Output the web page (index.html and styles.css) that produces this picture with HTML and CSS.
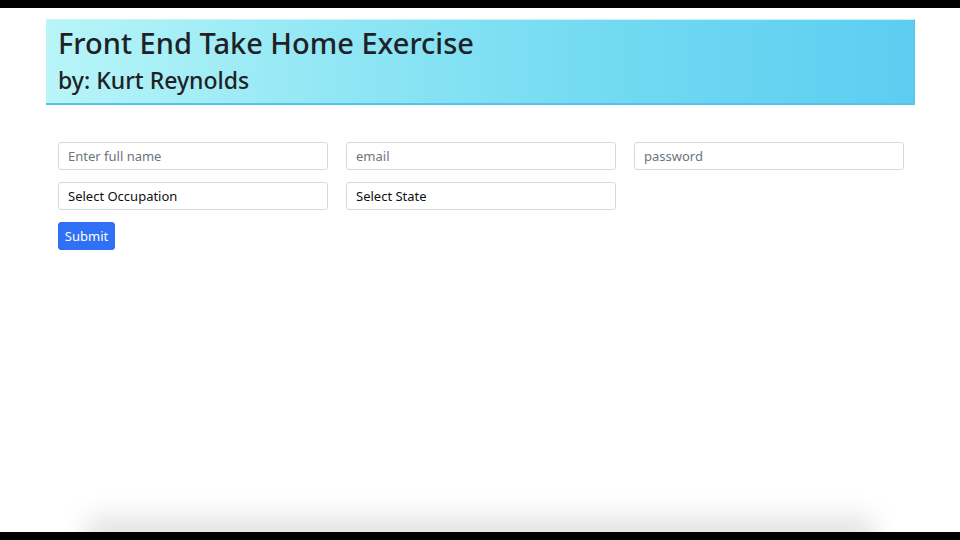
FILE: index.html
```html
<!DOCTYPE html>
<html>
<head>
<meta charset="utf-8">
<link rel="stylesheet" href="styles.css">
</head>
<body>
<div class="page">
  <header class="banner">
    <h1 class="title">Front End Take Home Exercise</h1>
    <h2 class="subtitle">by: Kurt Reynolds</h2>
  </header>
  <form class="form">
    <div class="grid">
      <input class="field" type="text" placeholder="Enter full name">
      <input class="field" type="text" placeholder="email">
      <input class="field" type="password" placeholder="password">
      <div class="field select">Select Occupation</div>
      <div class="field select">Select State</div>
    </div>
    <button class="submit" type="button">Submit</button>
  </form>
  <div class="spacer"></div>
  <div class="shadow"></div>
</div>
</body>
</html>
```
FILE: styles.css
```css
html { background: #000; }
body { margin: 0; font-family: "Noto Sans", "Open Sans", sans-serif; }
.page {
  margin-top: 8px;
  height: 524px;
  background: #fff;
  display: flex;
  flex-direction: column;
  overflow: hidden;
}
.banner {
  margin: 11px 45px 0 46px;
  height: 86px;
  box-sizing: border-box;
  padding: 6px 12px 0;
  background: linear-gradient(90deg, #b8f5f8 0%, #8fe6f4 35%, #72daf2 65%, #5ccdf1 100%);
  border-bottom: 2px solid #55c4ea;
  border-right: 1px solid #55c4ea;
  border-top: 1px solid #c9f6fa;
}
.title {
  margin: 0;
  font-size: 29px;
  font-weight: 500;
  color: #1e2226;
  line-height: 34px;
}
.subtitle {
  margin: 5px 0 0;
  font-size: 23px;
  font-weight: 500;
  color: #1e2226;
  line-height: 30px;
}
.form {
  padding: 37px 56px 0 58px;
}
.grid {
  display: grid;
  grid-template-columns: repeat(3, 270px);
  column-gap: 18px;
  row-gap: 12px;
}
.field {
  height: 28px;
  box-sizing: border-box;
  border: 1px solid #d6d9dc;
  border-radius: 3px;
  padding: 0 9px;
  font-family: inherit;
  font-size: 13px;
  color: #111;
  background: #fff;
  outline: none;
}
.field::placeholder { color: #6c757d; }
.select {
  display: flex;
  align-items: center;
}
.submit {
  margin-top: 12px;
  height: 28px;
  width: 57px;
  padding: 0;
  border: 1px solid #2f6bef;
  border-radius: 3px;
  background: #3070f4;
  color: #fff;
  font-family: inherit;
  font-size: 13px;
}
.spacer { flex: 1; }
.shadow {
  height: 10px;
  margin: 0 100px -10px;
  box-shadow: 0 0 28px 14px rgba(0,0,0,0.12);
}
```
